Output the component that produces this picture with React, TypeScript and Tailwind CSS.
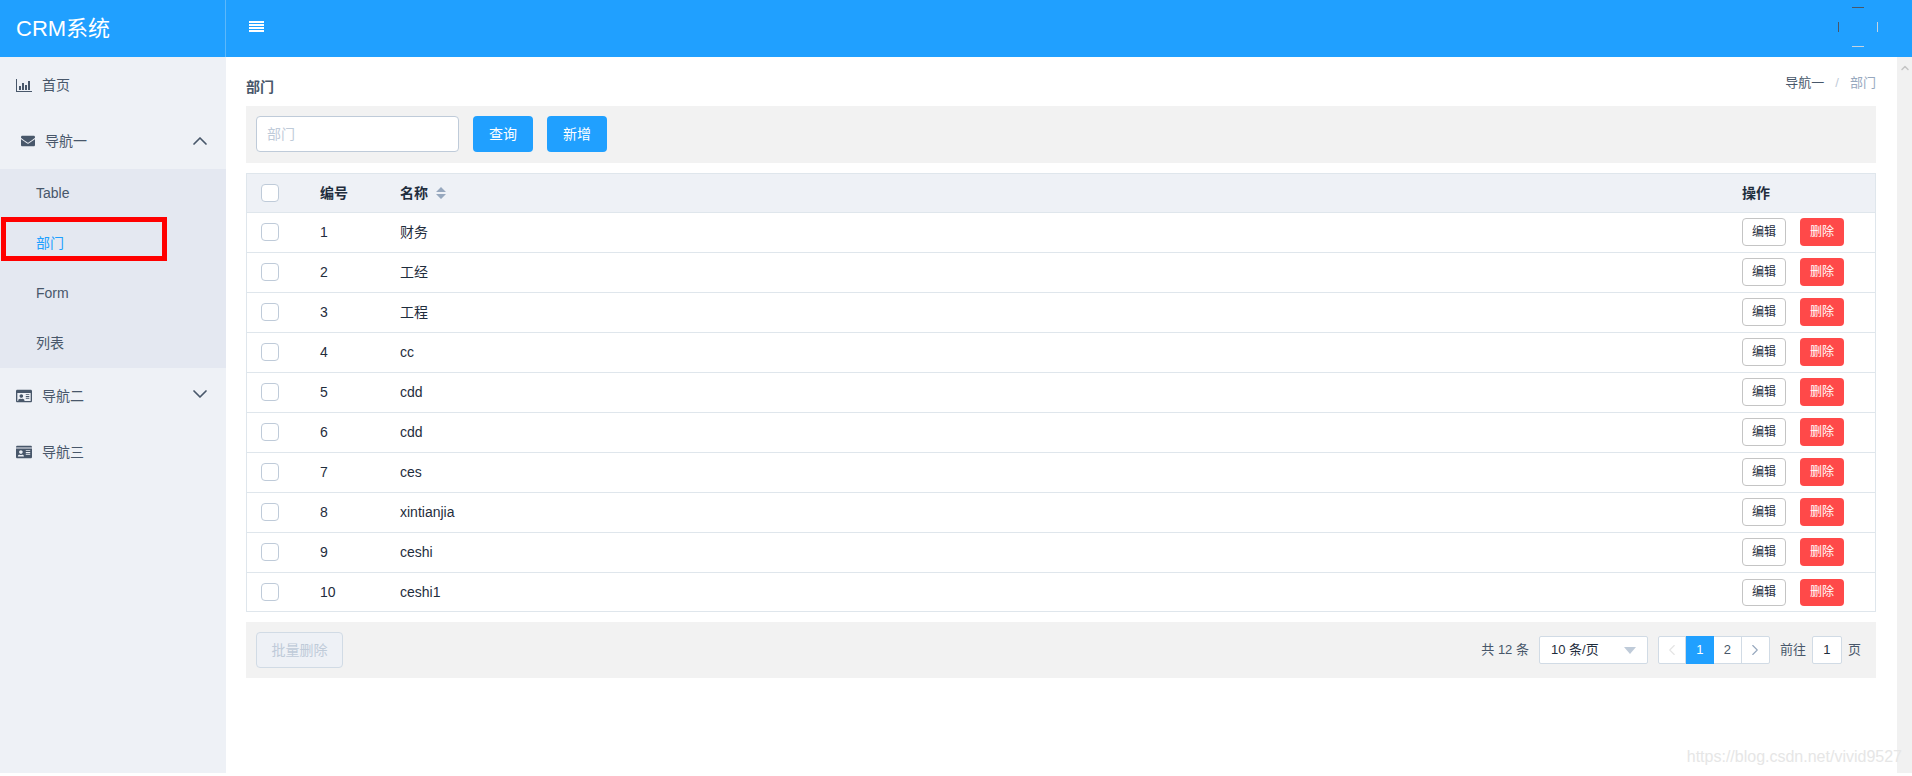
import { ChevronDown, ChevronLeft, ChevronRight, ChevronUp } from "lucide-react";
import { FaEnvelope, FaIdCard, FaRegIdCard } from "react-icons/fa";

const rows = [
  { id: 1, name: "财务" },
  { id: 2, name: "工经" },
  { id: 3, name: "工程" },
  { id: 4, name: "cc" },
  { id: 5, name: "cdd" },
  { id: 6, name: "cdd" },
  { id: 7, name: "ces" },
  { id: 8, name: "xintianjia" },
  { id: 9, name: "ceshi" },
  { id: 10, name: "ceshi1" },
];

function ChartIcon() {
  return (
    <svg width="16" height="13" viewBox="0 0 16 13" fill="#48576a">
      <path d="M0 0h1v12h15v1H0z" />
      <rect x="3" y="7" width="2" height="4" />
      <rect x="6" y="4" width="2" height="7" />
      <rect x="9" y="6" width="2" height="5" />
      <rect x="12" y="2" width="2" height="9" />
    </svg>
  );
}

function Checkbox() {
  return <span className="block w-[18px] h-[18px] bg-white border border-[#bfcbd9] rounded-[4px]" />;
}

function Avatar() {
  return (
    <svg width="40" height="40" viewBox="0 0 40 40" fill="none">
      <path d="M14 0.5h12" stroke="#48576a" />
      <path d="M0.5 15v10" stroke="#48576a" />
      <path d="M14 39.5h12" stroke="#c5d3e0" />
      <path d="M39.5 15v10" stroke="#c5d3e0" />
    </svg>
  );
}

export default function App() {
  return (
    <div className="relative h-[776px] flex flex-col overflow-hidden bg-white text-[14px] text-[#1f2d3d] font-['Liberation_Sans','Noto_Sans_CJK_SC',sans-serif]">
      <header className="h-[57px] shrink-0 flex items-center bg-[#20a0ff] text-white">
        <div className="w-[226px] h-full flex items-center pl-4 text-[22px] border-r border-[#5cb8fb]">CRM系统</div>
        <div className="ml-[23px] mb-[5px] flex flex-col gap-[1px]">
          <span className="block w-[15px] h-[2px] bg-white" />
          <span className="block w-[15px] h-[2px] bg-white" />
          <span className="block w-[15px] h-[2px] bg-white" />
          <span className="block w-[15px] h-[2px] bg-white" />
        </div>
        <div className="ml-auto mr-[34px] mb-[3px]">
          <Avatar />
        </div>
      </header>

      <div className="flex flex-1 min-h-0 mb-[3px]">
        <aside className="w-[226px] shrink-0 bg-[#eef1f6] text-[#48576a]">
          <div className="h-14 flex items-center pl-4">
            <ChartIcon />
            <span className="ml-[10px]">首页</span>
          </div>
          <div className="h-14 flex items-center pl-[21px] pr-[14px]">
            <FaEnvelope size={14} />
            <span className="ml-[10px]">导航一</span>
            <ChevronUp size={24} strokeWidth={1.7} className="ml-auto" />
          </div>
          <div className="h-[199px] bg-[#e4e8f1] relative">
            <div className="h-[49px] flex items-center pl-9">Table</div>
            <div className="h-[50px] flex items-center pl-9 text-[#20a0ff]">部门</div>
            <div className="h-[50px] flex items-center pl-9">Form</div>
            <div className="h-[50px] flex items-center pl-9">列表</div>
            <div className="absolute left-[1px] top-[48px] w-[166px] h-[44px] border-[5px] border-[#ff0000]" />
          </div>
          <div className="h-14 flex items-center pl-4 pr-[14px]">
            <FaRegIdCard size={16} />
            <span className="ml-[10px]">导航二</span>
            <ChevronDown size={24} strokeWidth={1.7} className="ml-auto mb-[5px]" />
          </div>
          <div className="h-14 flex items-center pl-4">
            <FaIdCard size={16} />
            <span className="ml-[10px]">导航三</span>
          </div>
        </aside>

        <main className="flex-1 min-w-0 pl-5 pr-[21px] pt-[16px]">
          <div className="h-[33px] flex justify-between">
            <h2 className="font-bold text-[#48576a] mt-[4px] leading-5">部门</h2>
            <div className="flex leading-5 text-[13px] text-[#48576a]">
              <span>导航一</span>
              <span className="mx-[11px] text-[#bfcbd9]">/</span>
              <span className="text-[#97a8be]">部门</span>
            </div>
          </div>

          <div className="h-[57px] bg-[#f2f2f2] flex items-start pt-[10px] pl-[10px]">
            <input
              placeholder="部门"
              className="w-[203px] h-9 px-[10px] bg-white border border-[#bfcbd9] rounded-[4px] placeholder:text-[#bfcbd9] outline-none"
            />
            <button className="ml-[14px] w-[60px] h-9 bg-[#20a0ff] text-white rounded-[4px]">查询</button>
            <button className="ml-[14px] w-[60px] h-9 bg-[#20a0ff] text-white rounded-[4px]">新增</button>
          </div>

          <div className="mt-[10px] border border-[#dfe6ec]">
            <div className="h-[39px] flex items-center bg-[#eef1f6] border-b border-[#dfe6ec] font-bold">
              <div className="w-[73px] pl-[14px]">
                <Checkbox />
              </div>
              <div className="w-20">编号</div>
              <div className="flex-1 flex items-center">
                名称
                <svg width="10" height="12" viewBox="0 0 10 12" fill="#97a8be" className="ml-2">
                  <path d="M5 0l5 5H0zM5 12L0 7h10z" />
                </svg>
              </div>
              <div className="w-[133px]">操作</div>
            </div>
            {rows.map((row, i) => (
              <div
                key={row.id}
                className={i < 9 ? "h-10 pb-px flex items-center border-b border-[#dfe6ec]" : "h-[38px] flex items-center"}
              >
                <div className="w-[73px] pl-[14px]">
                  <Checkbox />
                </div>
                <div className="w-20">{row.id}</div>
                <div className="flex-1">{row.name}</div>
                <div className="w-[133px] flex gap-[14px]">
                  <button className={`w-11 ${i < 9 ? "h-7" : "h-[27px]"} bg-white border border-[#c4c4c4] rounded-[4px] text-[12px] text-[#1f2d3d]`}>编辑</button>
                  <button className={`w-11 ${i < 9 ? "h-7" : "h-[27px]"} bg-[#ff4949] rounded-[4px] text-[12px] text-white`}>删除</button>
                </div>
              </div>
            ))}
          </div>

          <div className="mt-[10px] h-[56px] bg-[#f2f2f2] flex items-center pl-[10px] pr-[15px] text-[#48576a]">
            <button className="w-[87px] h-9 bg-[#eef1f6] border border-[#d1dbe5] rounded-[4px] text-[#bfcbd9]">批量删除</button>
            <div className="ml-auto flex items-center text-[13px]">
              <span>共 12 条</span>
              <div className="ml-[10px] w-[109px] h-7 px-[11px] flex items-center justify-between bg-white border border-[#d1dbe5] rounded-[2px] text-[#1f2d3d]">
                <span>10 条/页</span>
                <svg width="12" height="7" viewBox="0 0 12 7" fill="#bfcbd9">
                  <path d="M0 0h12L6 7z" />
                </svg>
              </div>
              <div className="ml-[10px] flex h-7 border border-[#d1dbe5] rounded-[2px] bg-white">
                <span className="w-[27px] flex items-center justify-center border-r border-[#d1dbe5] text-[#e4e4e4]">
                  <ChevronLeft size={18} strokeWidth={1.5} />
                </span>
                <span className="w-[28px] -my-[1px] flex items-center justify-center bg-[#20a0ff] text-white">1</span>
                <span className="w-[28px] flex items-center justify-center border-r border-[#d1dbe5]">2</span>
                <span className="w-[27px] flex items-center justify-center text-[#97a8be]">
                  <ChevronRight size={18} strokeWidth={1.5} />
                </span>
              </div>
              <span className="ml-[10px]">前往</span>
              <span className="ml-[6px] w-[30px] h-7 flex items-center justify-center bg-white border border-[#d1dbe5] rounded-[2px] text-[#1f2d3d]">1</span>
              <span className="ml-[6px]">页</span>
            </div>
          </div>
        </main>

        <div className="w-[15px] shrink-0 bg-[#f1f1f1] flex justify-center pt-[5px]">
          <ChevronUp size={12} strokeWidth={3} className="text-[#c4c4c4]" />
        </div>
      </div>

      <div className="absolute right-[10px] bottom-[9px] text-[16px] leading-5 text-[#e6e6e6]">https://blog.csdn.net/vivid9527</div>
    </div>
  );
}
